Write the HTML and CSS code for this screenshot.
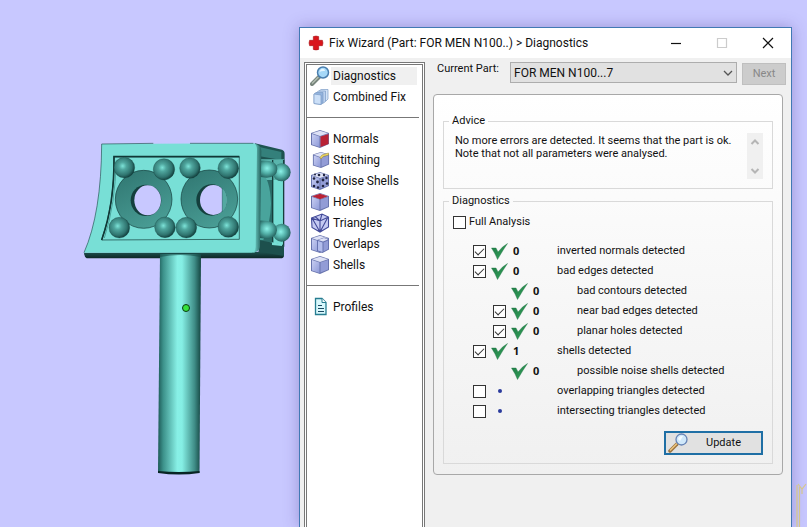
FILE: index.html
```html
<!DOCTYPE html>
<html lang="en">
<head>
<meta charset="utf-8">
<title>Fix Wizard</title>
<link rel="stylesheet" href="styles.css">
</head>
<body>
<svg class="defs" width="0" height="0" aria-hidden="true">
  <defs>
    <linearGradient id="face" x1="0" y1="0" x2="1" y2="1"><stop offset="0" stop-color="#c9cff2"/><stop offset="1" stop-color="#8d99d8"/></linearGradient>
    <linearGradient id="green" x1="0" y1="0" x2="1" y2="1"><stop offset="0" stop-color="#1c7a45"/><stop offset="1" stop-color="#38a35c"/></linearGradient>
    <symbol id="tick" viewBox="0 0 17 17"><path d="M.5 5 L5 5 L7 9 Q11 3.500 16.500 .5 Q12 7 6.500 16.500 Q4.500 11 .5 5Z" fill="url(#green)" stroke="#217444" stroke-width=".4"/></symbol>
    <symbol id="lens" viewBox="0 0 20 20"><path d="M2 18 L9 11" stroke="#77847b" stroke-width="4" stroke-linecap="round"/><path d="M2 17.500 L8.500 11" stroke="#b4bfb2" stroke-width="1.500"/><circle cx="13" cy="6.500" r="5.500" fill="#a6d8f8" stroke="#4a7eae" stroke-width="1.500"/><path d="M9.500 6 Q10 3 13 2.700 Q15 3 15 5 Q12 4.500 9.500 6Z" fill="#e6f6ff"/></symbol>
    <symbol id="cube" viewBox="0 0 20 20"><path d="M1 4 L10 1 L19 4 V15 L10 19 L1 16Z" fill="#6874ad"/><path d="M2 5 L9.500 7.500 V18 L2 15.500Z" fill="url(#face)"/><path d="M10.500 7.500 L18 5 V14.500 L10.500 17.500Z" fill="#929cd6"/><path d="M2 4.200 L10 1.800 L18 4.200 L10 7Z" fill="#dde1f5"/></symbol>
  </defs>
</svg>
<div class="desktop">
  <svg class="model" viewBox="0 0 299 527" role="img" aria-label="Part model">
    <defs>
      <linearGradient id="tube"><stop offset="0" stop-color="#1d5956"/><stop offset=".12" stop-color="#3c918a"/><stop offset=".45" stop-color="#88f0e6"/><stop offset=".56" stop-color="#85eee4"/><stop offset=".85" stop-color="#3f8d87"/><stop offset="1" stop-color="#154541"/></linearGradient>
      <radialGradient id="ball" cx=".42" cy=".42" r=".6"><stop offset="0" stop-color="#7de3d8"/><stop offset=".3" stop-color="#4fa69e"/><stop offset=".75" stop-color="#2f746f"/><stop offset="1" stop-color="#123f3d"/></radialGradient>
      <radialGradient id="sideball" cx=".45" cy=".45" r=".62"><stop offset="0" stop-color="#8bf2e8"/><stop offset=".5" stop-color="#50aca4"/><stop offset="1" stop-color="#1d5552"/></radialGradient>
      <linearGradient id="ring" x1="0" y1="0" x2=".5" y2="1"><stop offset="0" stop-color="#2f7570"/><stop offset="1" stop-color="#489b93"/></linearGradient>
      <linearGradient id="edge"><stop offset="0" stop-color="#78dfd6"/><stop offset="1" stop-color="#235e5a"/></linearGradient>
      <linearGradient id="under" x1="0" y1="0" x2="0" y2="1"><stop offset="0" stop-color="#2e7470"/><stop offset="1" stop-color="#0c2726"/></linearGradient>
    </defs>
    <g transform="translate(70 130) scale(.3333)">
      <path d="M42 368 L560 366 L642 350 V378 Q641 385 632 385 L50 385 Q43 382 42 368Z" fill="url(#under)"/>
      <path d="M555 40 L636 59 Q644 62 644 72 V120 H565Z" fill="#1e5350"/>
      <path d="M565 50 L634 66 V90 L565 78Z" fill="#34807b"/>
      <path d="M568 88 H642 V345 L568 360Z" fill="#5ab5ad"/>
      <path d="M568 150 H608 V335 L568 350Z" fill="#2b6d69"/>
      <path d="M575 130 Q600 145 603 220 Q602 280 580 330 H568 V130Z" fill="#49a49c"/>
      <path d="M610 150 H642 V345 H610Z" fill="#74ddd3"/>
      <path d="M608 90 V340 M641 90 V350" stroke="#173f3d" stroke-width="4"/>
      <circle cx="635" cy="127" r="27" fill="url(#sideball)"/>
      <circle cx="635" cy="308" r="27" fill="url(#sideball)"/>
      <path d="M566 92 Q621 88 622 117 Q621 142 590 143 L566 140Z" fill="url(#sideball)"/>
      <path d="M566 272 Q619 270 621 300 Q619 325 590 326 L566 323Z" fill="url(#sideball)"/>
      <path d="M566 330 L642 345 V378 L566 365Z" fill="#1d504d"/>
      <path d="M606 337 L636 342 V348 L606 345Z" fill="#79e0d7"/>
      <path d="M550 40 Q574 43 574 62 L570 350 Q568 365 550 368Z" fill="url(#edge)"/>
      <path d="M95 42 L548 40 Q561 42 561 58 L557 350 Q556 368 545 368 L42 368 Q94 250 95 42Z" fill="#78dfd6"/>
      <path d="M42 368 Q94 250 95 42 L250 40 M360 40 H550" fill="none" stroke="#225450" stroke-width="2"/>
      <path d="M132 80 H508 V328 L95 330 Q134 220 132 80Z" fill="#78dfd6" stroke="#113836" stroke-width="2"/>
      <path d="M508 80 H132 Q134 220 95 330" fill="none" stroke="#113836" stroke-width="5"/>
      <path d="M138 92 Q137 220 103 324" fill="none" stroke="#4aa39b" stroke-width="3"/>
      <ellipse cx="221" cy="208" rx="85" ry="87" fill="url(#ring)" stroke="#123b39" stroke-width="2"/>
      <ellipse cx="418" cy="207" rx="85" ry="87" fill="url(#ring)" stroke="#123b39" stroke-width="2"/>
      <ellipse cx="228" cy="211" rx="46" ry="47" fill="#143f3d"/>
      <ellipse cx="425" cy="210" rx="46" ry="47" fill="#143f3d"/>
      <ellipse cx="233" cy="211" rx="40" ry="45" fill="#c8c8ff"/>
      <ellipse cx="430" cy="210" rx="40" ry="45" fill="#c8c8ff"/>
      <path d="M457 175 Q471 190 471 211 Q470 232 457 246Z" fill="#54a9a1"/>
      <path d="M457 175 V246" stroke="#2b6d69" stroke-width="2"/>
      <g fill="url(#ball)" stroke="#153f3c" stroke-width="1">
        <circle cx="163" cy="113" r="31"/><circle cx="282" cy="118" r="32"/><circle cx="360" cy="114" r="31"/><circle cx="475" cy="115" r="31"/>
        <circle cx="148" cy="293" r="31"/><circle cx="285" cy="292" r="31"/><circle cx="349" cy="293" r="31"/><circle cx="475" cy="291" r="31"/>
      </g>
    </g>
    <path d="M160 254 H201 L199.500 473 H158Z" fill="url(#tube)"/>
    <path d="M160 254 Q180 252 201 254 V257 Q180 253 160 257Z" fill="#174b48" opacity=".6"/>
    <path d="M158 471 Q179 473 199.500 471 V473 Q179 476 158 473Z" fill="#082524"/>
    <circle cx="186" cy="308" r="3.500" fill="#35e23b" stroke="#0b3a12"/>
  </svg>

  <main class="window">
    <header class="titlebar">
      <svg class="cross" viewBox="0 0 15 15" aria-hidden="true"><path d="M5 1.500 Q7.500 .500 10 1.500 V5 H13.500 Q14.500 7.500 13.500 10 H10 V13.500 Q7.500 14.500 5 13.500 V10 H1.500 Q.500 7.500 1.500 5 H5Z" fill="#d9141b" stroke="#a81419" stroke-width=".6"/></svg>
      <h1>Fix Wizard (Part: FOR MEN N100..) &gt; Diagnostics</h1>
      <button class="winbtn" aria-label="Minimize"><svg viewBox="0 0 12 12"><path d="M1 6.500 H11"/></svg></button>
      <button class="winbtn off" aria-label="Maximize" disabled><svg viewBox="0 0 12 12"><path d="M1.500 1.500 H10.500 V10.500 H1.500Z"/></svg></button>
      <button class="winbtn" aria-label="Close"><svg viewBox="0 0 12 12"><path d="M1 1 L11 11 M11 1 L1 11"/></svg></button>
    </header>
    <div class="content">
      <nav class="sidebar">
        <a class="item current" href="#"><svg viewBox="0 0 20 20"><use href="#lens"/></svg><span>Diagnostics</span></a>
        <a class="item" href="#"><svg viewBox="0 0 20 20"><g stroke="#7c9cc6" stroke-width=".7"><path d="M9 4 L11 2.500 H18 V12 L16 14 H9Z" fill="#d3e3f7"/><path d="M6.500 5.500 L8.500 4 H15.500 V14.500 L13.500 16 H6.500Z" fill="#bcd2ef"/><path d="M4 7 L6 5.500 H13 V16 L11 17.500 L4 16.500Z" fill="#92b3de"/><path d="M4 7 L11 8 V17.500 L4 16.500Z" fill="#cbdff7"/></g></svg><span>Combined Fix</span></a>
        <hr>
        <a class="item" href="#"><svg viewBox="0 0 20 20"><use href="#cube"/><path d="M10.500 7.500 L18.500 5 V15 L10.500 18Z" fill="#b92235"/></svg><span>Normals</span></a>
        <a class="item" href="#"><svg viewBox="0 0 20 20"><g transform="translate(2 1) scale(.9)"><use href="#cube" width="20" height="20"/></g><path d="M10 7.500 L12 5 L18.500 3 V5 L13 6.500 L11 9Z" fill="#f5df60" stroke="#9a873e" stroke-width=".6"/></svg><span>Stitching</span></a>
        <a class="item" href="#"><svg viewBox="0 0 20 20"><use href="#cube"/><g fill="#20233f"><circle cx="4" cy="7.500" r="1.300"/><circle cx="7.500" cy="11" r="1.400"/><circle cx="4" cy="15" r="1.300"/><circle cx="8" cy="16.500" r="1.200"/><circle cx="13" cy="9" r="1.400"/><circle cx="16.500" cy="7" r="1.200"/><circle cx="13" cy="15" r="1.300"/><circle cx="17" cy="12.500" r="1.300"/><circle cx="9" cy="4" r="1.300"/><circle cx="14" cy="4" r="1.200"/><circle cx="5" cy="3.500" r="1"/></g></svg><span>Noise Shells</span></a>
        <a class="item" href="#"><svg viewBox="0 0 20 20"><use href="#cube"/><path d="M2 4.200 L10 1.800 L18 4.200 L10 7.200Z" fill="#b92235"/></svg><span>Holes</span></a>
        <a class="item" href="#"><svg viewBox="0 0 20 20"><path d="M1.500 5 L12 1 L18.500 4 V14 L10 19 L2 14.500Z" fill="#c5caf2"/><path d="M1.500 5 L12 1 L18.500 4 V14 L10 19 L2 14.500Z M1.500 5 L10 8 L18.500 4 M10 8 V19 M2 5 L10 19 M18 4 L10 19 M12 1 L10 8 M5 3.500 L10 8" fill="none" stroke="#424a98" stroke-width="1.100"/></svg><span>Triangles</span></a>
        <a class="item" href="#"><svg viewBox="0 0 20 20"><use href="#cube"/><path d="M7 6 L14 3.500 L19 5.500 V15.500 L12.500 19 L7 17Z" fill="#6672b0"/><path d="M8 7 L12.500 8.500 V18 L8 16.500Z" fill="#b3bdec"/><path d="M13.500 8.500 L18 6.500 V15 L13.500 17.500Z" fill="#929cd6"/><path d="M8 6 L14 4 L18 5.500 L13 7.500Z" fill="#dde1f5"/></svg><span>Overlaps</span></a>
        <a class="item" href="#"><svg viewBox="0 0 20 20"><use href="#cube"/></svg><span>Shells</span></a>
        <hr>
        <a class="item" href="#"><svg viewBox="0 0 20 20"><path d="M5.500 1.500 H12 L16 5.500 V17.500 H5.500Z" fill="#d9f8fc" stroke="#277d91" stroke-width="1.300"/><path d="M12 1.500 V5.500 H16" fill="#fff" stroke="#277d91"/><path d="M8 8.500 H12 M8 11.500 H14 M8 14.500 H14" stroke="#1c4a63" stroke-width="1.200"/></svg><span>Profiles</span></a>
      </nav>
      <form class="pane">
        <div class="partrow">
          <label for="part">Current Part:</label>
          <div class="selectbox">
            <select id="part"><option>FOR MEN N100...7</option></select>
            <svg viewBox="0 0 10 6" aria-hidden="true"><path d="M1 1 L5 5 L9 1"/></svg>
          </div>
          <button type="button" class="next" disabled>Next</button>
        </div>
        <div class="panel">
          <fieldset class="advice">
            <legend>Advice</legend>
            <textarea readonly aria-label="Advice">No more errors are detected. It seems that the part is ok.
Note that not all parameters were analysed.</textarea>
            <div class="scrollbar" aria-hidden="true"><svg viewBox="0 0 10 6"><path d="M1.500 5 L5 1.500 L8.500 5"/></svg><svg viewBox="0 0 10 6"><path d="M1.500 1 L5 4.500 L8.500 1"/></svg></div>
          </fieldset>
          <fieldset class="diagnostics">
            <legend>Diagnostics</legend>
            <div class="full"><input type="checkbox" id="full"><label for="full">Full Analysis</label></div>
            <ul class="checks">
              <li><input type="checkbox" id="c1" checked><svg class="tick"><use href="#tick"/></svg><b>0</b><label for="c1">inverted normals detected</label></li>
              <li><input type="checkbox" id="c2" checked><svg class="tick"><use href="#tick"/></svg><b>0</b><label for="c2">bad edges detected</label></li>
              <li class="sub"><i></i><svg class="tick"><use href="#tick"/></svg><b>0</b><span>bad contours detected</span></li>
              <li class="sub"><input type="checkbox" id="c4" checked><svg class="tick"><use href="#tick"/></svg><b>0</b><label for="c4">near bad edges detected</label></li>
              <li class="sub"><input type="checkbox" id="c5" checked><svg class="tick"><use href="#tick"/></svg><b>0</b><label for="c5">planar holes detected</label></li>
              <li><input type="checkbox" id="c6" checked><svg class="tick"><use href="#tick"/></svg><b>1</b><label for="c6">shells detected</label></li>
              <li class="sub"><i></i><svg class="tick"><use href="#tick"/></svg><b>0</b><span>possible noise shells detected</span></li>
              <li><input type="checkbox" id="c8"><i class="dot"></i><b></b><label for="c8">overlapping triangles detected</label></li>
              <li><input type="checkbox" id="c9"><i class="dot"></i><b></b><label for="c9">intersecting triangles detected</label></li>
            </ul>
            <button type="button" class="update"><svg viewBox="0 0 20 20" aria-hidden="true"><path d="M2 18 L9 11" stroke="#9b7440" stroke-width="3.500" stroke-linecap="round"/><path d="M2 17.500 L9 10.500" stroke="#eec77f" stroke-width="1.500"/><circle cx="13.500" cy="6.500" r="5.500" fill="#d0e8fa" stroke="#6683b5" stroke-width="1.300"/><path d="M10 6 Q11 2.500 15 3 L12 8Z" fill="#f5fbff"/></svg><span>Update</span></button>
          </fieldset>
        </div>
      </form>
    </div>
  </main>
  <svg class="axis" viewBox="0 0 12 44" aria-hidden="true"><path d="M2 2 V44 M4.500 44 V4 M3 1 L7 6 L11 1 M7 6 V11" fill="none" stroke="#d6c78a" stroke-width="1.200"/></svg>
</div>
</body>
</html>
```
FILE: styles.css
```css
* { box-sizing: border-box; }
body {
  margin: 0;
  background: #c8c8ff;
  color: #111;
  font: 11px/16px Roboto, sans-serif;
}
button, select, textarea { font: inherit; color: inherit; }
.defs { position: absolute; }
.desktop {
  position: relative;
  display: flex;
  min-height: 100vh;
  overflow: hidden;
}
.model { flex: none; width: 299px; height: 527px; }
.window {
  flex: 1;
  display: flex;
  flex-direction: column;
  min-width: 0;
  margin: 27px 15px 0 0;
  border: 1px solid #4179b4;
  border-bottom: 0;
  background: #f0f0f0;
  box-shadow: 0 0 14px rgba(70, 50, 130, .35);
}
.titlebar {
  display: flex;
  align-items: center;
  height: 30px;
  padding-left: 8px;
  background: #fff;
}
.cross { width: 16px; height: 16px; }
.titlebar h1 {
  flex: 1;
  margin: 0 0 0 5px;
  font-size: 12px;
  font-weight: 400;
  white-space: nowrap;
}
.winbtn {
  display: flex;
  align-items: center;
  justify-content: center;
  width: 46px;
  height: 30px;
  padding: 0;
  border: 0;
  background: none;
}
.winbtn svg { width: 12px; height: 12px; fill: none; stroke: #111; stroke-width: 1.2; }
.winbtn.off svg { stroke: #ccc; }

.content { flex: 1; display: flex; padding: 4px 4px 0; }
.sidebar {
  flex: none;
  width: 121px;
  padding: 0 3px 0 0;
  border: 3px double #777;
  border-bottom: 0;
  background: #fff;
}
.item {
  display: flex;
  align-items: center;
  height: 21px;
  padding: 0 2px 0 3px;
  color: #111;
  font-size: 12px;
  line-height: 18px;
  white-space: nowrap;
  text-decoration: none;
}
.item svg { flex: none; width: 20px; height: 20px; }
.item span { flex: 1; margin-left: 1px; padding-left: 2px; }
.item.current span { background: #f0f0f0; }
.sidebar hr { height: 1px; margin: 10px 0; border: 0; background: #777; }

.pane { flex: 1; min-width: 0; padding: 0 1px 0 8px; }
.partrow { display: flex; align-items: flex-start; padding-left: 4px; }
.partrow label { width: 73px; line-height: 14px; white-space: nowrap; }
.selectbox { position: relative; flex: 1; }
.selectbox select {
  display: block;
  width: 100%;
  height: 21px;
  padding: 0 3px;
  border: 1px solid #adadad;
  border-radius: 0;
  background: #e1e1e1;
  font-size: 12px;
  appearance: none;
}
.selectbox svg {
  position: absolute;
  top: 8px;
  right: 4px;
  width: 10px;
  height: 6px;
  fill: none;
  stroke: #555;
  stroke-width: 1.3;
  pointer-events: none;
}
.next {
  width: 44px;
  height: 22px;
  margin: 1px 0 0 5px;
  padding: 0;
  border: 1px solid #bfbfbf;
  background: #ccc;
  color: #888;
}
.panel {
  margin: 9px 3px 0 0;
  padding: 18px 9px 10px;
  border: 1px solid #a8a8a8;
  border-radius: 4px;
  background: linear-gradient(#fff, #f0f0f0);
}
fieldset { min-width: 0; margin: 0; padding: 4px 9px 0; border: 1px solid #d9d9d9; }
legend { margin-left: -4px; padding: 0 3px; line-height: 16px; }
.advice { display: flex; height: 76px; }
.advice textarea {
  flex: 1;
  min-width: 0;
  height: 46px;
  padding: 1px 0 1px 2px;
  border: 0;
  background: none;
  line-height: 13px;
  overflow: hidden;
  resize: none;
  outline: 0;
}
.scrollbar {
  display: flex;
  flex-direction: column;
  justify-content: space-between;
  align-items: center;
  width: 16px;
  height: 46px;
  padding: 6px 0 5px;
  background: #f0f0f0;
}
.scrollbar svg { width: 10px; height: 6px; fill: none; stroke: #b5b5b5; stroke-width: 2; }
.diagnostics { margin-top: 4px; padding-bottom: 8px; }
input[type="checkbox"] {
  flex: none;
  display: grid;
  place-items: center;
  width: 13px;
  height: 13px;
  margin: 0;
  border: 1px solid #333;
  background: #fff;
  appearance: none;
}
input:checked::after {
  content: "";
  width: 8px;
  height: 4px;
  margin-bottom: 2px;
  border: solid #333;
  border-width: 0 0 1px 1px;
  transform: rotate(-45deg);
}
.full { display: flex; align-items: center; gap: 3px; height: 18px; }
.checks { margin: 10px 0 0; padding: 0 0 0 20px; list-style: none; }
.checks li {
  display: grid;
  grid-template-columns: 13px 17px 39px 1fr;
  column-gap: 5px;
  align-items: center;
  height: 20px;
  white-space: nowrap;
}
.checks .sub { padding-left: 20px; }
.tick { width: 17px; height: 17px; }
.checks b { font-family: "Noto Sans", sans-serif; }
.dot { justify-self: center; width: 4px; height: 4px; border-radius: 2px; background: #2a3a9c; }
.update {
  display: flex;
  align-items: center;
  width: 99px;
  height: 24px;
  margin: 10px 0 0 auto;
  padding: 0 2px;
  border: 2px solid #1f6fa5;
  background: #e1e1e1;
}
.update svg { width: 20px; height: 20px; }
.update span { flex: 1; text-align: center; }
.axis { position: absolute; top: 483px; right: 0; width: 12px; height: 44px; }
```
